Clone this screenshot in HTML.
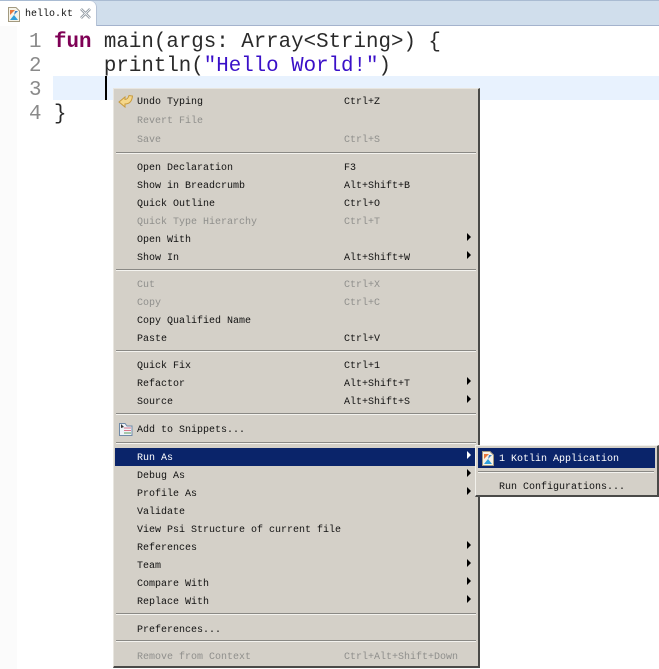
<!DOCTYPE html>
<html><head><meta charset="utf-8">
<style>
html,body{margin:0;padding:0;background:#fff}
#r{position:relative;width:659px;height:669px;overflow:hidden;background:#fff;font-family:"Liberation Mono",monospace}
#r div{position:absolute}
.code{font-size:20.8px;line-height:24px;white-space:pre;color:#2a2a2a;left:54px;margin-top:3px}
.ln{font-size:20.8px;line-height:24px;color:#8a8a8a;left:29px;margin-top:3px}
.t{font-size:10px;line-height:14px;height:14px;white-space:pre;color:#111;margin-top:2px}
.d{color:#8f8f8c}
.w{color:#fff}
.k{left:137px}
.s{left:344px}
.sep{left:116px;width:360px;height:1px;background:#8a8985;border-bottom:1px solid #f4f3ef}
.a{left:467px;width:0;height:0;margin-top:-1px;border-left:4px solid #000;border-top:4px solid transparent;border-bottom:4px solid transparent}
</style></head><body>
<div id="r">
<div style="left:0;top:0;width:659px;height:1px;background:#a9bbd2"></div>
<div style="left:0;top:1px;width:659px;height:24px;background:#d0deec"></div>
<div style="left:0;top:25px;width:659px;height:1px;background:#a4b3cd"></div>
<div style="left:0;top:1px;width:97px;height:25px;background:#fff;border-radius:0 6px 0 0;box-shadow:inset -1px 0 0 #b4c2d6"></div>
<svg style="position:absolute;left:8px;top:7px" width="12" height="15" viewBox="0 0 12 15"><path d="M.5.5H8L11.500 4V14.500H.5Z" fill="#f6f3e8" stroke="#a39a80"/><path d="M2 3H7L2 8Z" fill="#e8763a"/><path d="M2 13L6 8L10 13Z" fill="#2e9fdc"/><path d="M7 4L10 4L6 8Z" fill="#3d85c6"/></svg>
<div class="t" style="left:25px;top:6px;color:#111">hello.kt</div>
<svg style="position:absolute;left:80px;top:8px" width="11" height="11" viewBox="0 0 11 11"><path d="M1 1L10 10M10 1L1 10" stroke="#7e8a93" stroke-width="2.500" fill="none"/><path d="M1 1L10 10M10 1L1 10" stroke="#f0f2f4" stroke-width="1" fill="none"/></svg>

<div style="left:0;top:26px;width:17px;height:643px;background:#fbfbfb"></div>
<div style="left:53px;top:76px;width:606px;height:24px;background:#e8f2fe"></div>
<div class="ln" style="top:28px">1</div>
<div class="ln" style="top:52px">2</div>
<div class="ln" style="top:76px">3</div>
<div class="ln" style="top:100px">4</div>
<div class="code" style="top:28px"><b style="color:#7f0055">fun</b> main(args: Array&lt;String&gt;) {</div>
<div class="code" style="top:52px">    println(<span style="color:#3a10c8">"Hello World!"</span>)</div>
<div class="code" style="top:100px">}</div>
<div style="left:105px;top:76px;width:2px;height:24px;background:#000"></div>

<div style="left:113px;top:88px;width:364px;height:577px;background:#d4d0c8;border-top:1px solid #e8e6e0;border-left:1px solid #e8e6e0;border-right:2px solid #4a4a48;border-bottom:2px solid #4a4a48;box-sizing:content-box"></div>

<svg style="position:absolute;left:118px;top:94px" width="16" height="15" viewBox="0 0 16 15"><path d="M1 8L7 3V5.500C9 5.500 10 4.500 11 1.500L14.500 2C14 7 11.500 10 7 10V13Z" fill="#f5d78a" stroke="#c89a3c"/></svg>
<div class="t k" style="top:94px">Undo Typing</div><div class="t s" style="top:94px">Ctrl+Z</div>
<div class="t k d" style="top:113px">Revert File</div>
<div class="t k d" style="top:132px">Save</div><div class="t s d" style="top:132px">Ctrl+S</div>
<div class="sep" style="top:152px"></div>
<div class="t k" style="top:160px">Open Declaration</div><div class="t s" style="top:160px">F3</div>
<div class="t k" style="top:178px">Show in Breadcrumb</div><div class="t s" style="top:178px">Alt+Shift+B</div>
<div class="t k" style="top:196px">Quick Outline</div><div class="t s" style="top:196px">Ctrl+O</div>
<div class="t k d" style="top:214px">Quick Type Hierarchy</div><div class="t s d" style="top:214px">Ctrl+T</div>
<div class="t k" style="top:232px">Open With</div><div class="a" style="top:234px"></div>
<div class="t k" style="top:250px">Show In</div><div class="t s" style="top:250px">Alt+Shift+W</div><div class="a" style="top:252px"></div>
<div class="sep" style="top:269px"></div>
<div class="t k d" style="top:277px">Cut</div><div class="t s d" style="top:277px">Ctrl+X</div>
<div class="t k d" style="top:295px">Copy</div><div class="t s d" style="top:295px">Ctrl+C</div>
<div class="t k" style="top:313px">Copy Qualified Name</div>
<div class="t k" style="top:331px">Paste</div><div class="t s" style="top:331px">Ctrl+V</div>
<div class="sep" style="top:350px"></div>
<div class="t k" style="top:358px">Quick Fix</div><div class="t s" style="top:358px">Ctrl+1</div>
<div class="t k" style="top:376px">Refactor</div><div class="t s" style="top:376px">Alt+Shift+T</div><div class="a" style="top:378px"></div>
<div class="t k" style="top:394px">Source</div><div class="t s" style="top:394px">Alt+Shift+S</div><div class="a" style="top:396px"></div>
<div class="sep" style="top:413px"></div>
<svg style="position:absolute;left:119px;top:422px" width="14" height="15" viewBox="0 0 14 15"><path d="M.5 1.500H6L8 4H13V13.500H.5Z" fill="#eef3f8" stroke="#6f8aa8"/><path d="M5 6H12M5 8.500H12" stroke="#d9768a"/><path d="M5 11H12" stroke="#5d9e5d"/><path d="M2 2L5 5L2 6Z" fill="#333"/></svg>
<div class="t k" style="top:422px">Add to Snippets...</div>
<div class="sep" style="top:442px"></div>

<div style="left:115px;top:448px;width:362px;height:18px;background:#0a246a"></div>
<div class="t k w" style="top:450px">Run As</div><div class="a" style="top:452px;border-left-color:#fff"></div>
<div class="t k" style="top:468px">Debug As</div><div class="a" style="top:470px"></div>
<div class="t k" style="top:486px">Profile As</div><div class="a" style="top:488px"></div>
<div class="t k" style="top:504px">Validate</div>
<div class="t k" style="top:522px">View Psi Structure of current file</div>
<div class="t k" style="top:540px">References</div><div class="a" style="top:542px"></div>
<div class="t k" style="top:558px">Team</div><div class="a" style="top:560px"></div>
<div class="t k" style="top:576px">Compare With</div><div class="a" style="top:578px"></div>
<div class="t k" style="top:594px">Replace With</div><div class="a" style="top:596px"></div>
<div class="sep" style="top:613px"></div>
<div class="t k" style="top:622px">Preferences...</div>
<div class="sep" style="top:640px"></div>
<div class="t k d" style="top:649px">Remove from Context</div><div class="t s d" style="top:649px">Ctrl+Alt+Shift+Down</div>

<div style="left:475px;top:445px;width:181px;height:49px;background:#d4d0c8;border-top:1px solid #f2f1ec;border-left:1px solid #f2f1ec;border-right:2px solid #4a4a48;border-bottom:2px solid #4a4a48"></div>
<div style="left:478px;top:448px;width:177px;height:20px;background:#0a246a"></div>
<svg style="position:absolute;left:482px;top:451px" width="12" height="15" viewBox="0 0 12 15"><path d="M.5.5H8L11.500 4V14.500H.5Z" fill="#f6f3e8" stroke="#a39a80"/><path d="M2 3H7L2 8Z" fill="#e8763a"/><path d="M2 13L6 8L10 13Z" fill="#2e9fdc"/><path d="M7 4L10 4L6 8Z" fill="#3d85c6"/></svg>
<div class="t w" style="left:499px;top:451px">1 Kotlin Application</div>
<div style="left:478px;top:471px;width:176px;height:1px;background:#8a8985;border-bottom:1px solid #f4f3ef"></div>
<div class="t" style="left:499px;top:479px">Run Configurations...</div>
</div>
</body></html>
